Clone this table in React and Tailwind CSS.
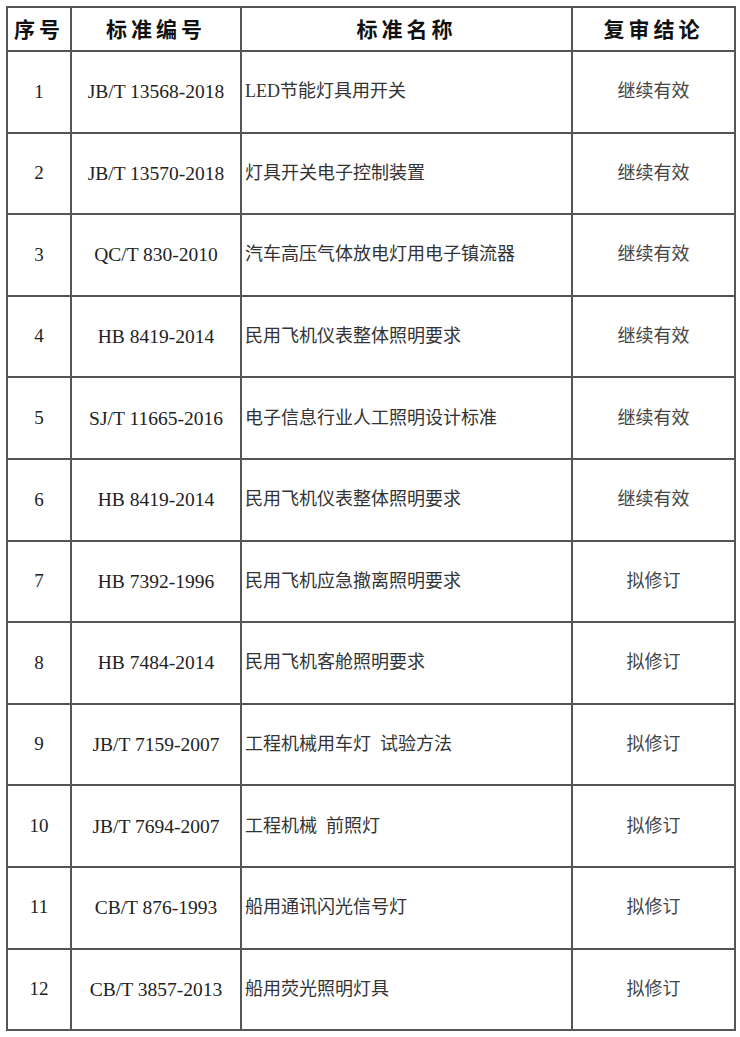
import React from "react";

const rows = [
  ["1", "JB/T 13568-2018", "LED节能灯具用开关", "继续有效"],
  ["2", "JB/T 13570-2018", "灯具开关电子控制装置", "继续有效"],
  ["3", "QC/T 830-2010", "汽车高压气体放电灯用电子镇流器", "继续有效"],
  ["4", "HB 8419-2014", "民用飞机仪表整体照明要求", "继续有效"],
  ["5", "SJ/T 11665-2016", "电子信息行业人工照明设计标准", "继续有效"],
  ["6", "HB 8419-2014", "民用飞机仪表整体照明要求", "继续有效"],
  ["7", "HB 7392-1996", "民用飞机应急撤离照明要求", "拟修订"],
  ["8", "HB 7484-2014", "民用飞机客舱照明要求", "拟修订"],
  ["9", "JB/T 7159-2007", "工程机械用车灯\u00a0\u00a0试验方法", "拟修订"],
  ["10", "JB/T 7694-2007", "工程机械\u00a0\u00a0前照灯", "拟修订"],
  ["11", "CB/T 876-1993", "船用通讯闪光信号灯", "拟修订"],
  ["12", "CB/T 3857-2013", "船用荧光照明灯具", "拟修订"],
];

const serif = {
  fontFamily: '"Liberation Serif", "Noto Sans CJK SC", serif',
};

export default function App() {
  return (
    <div className="bg-white w-[740px] h-[1037px] pt-[6px] pl-[6px]" style={serif}>
      <table className="border-collapse table-fixed w-[728px] text-[#222]">
        <colgroup>
          <col className="w-[64px]" />
          <col className="w-[170px]" />
          <col className="w-[331px]" />
          <col className="w-[163px]" />
        </colgroup>
        <thead>
          <tr className="h-[44px]">
            {["序号", "标准编号", "标准名称", "复审结论"].map((h) => (
              <th
                key={h}
                className="border-2 border-[#555] text-center text-[21px] font-bold tracking-[4px] text-[#111] p-0"
                style={{ fontFamily: '"Noto Sans CJK SC", sans-serif' }}
              >
                {h}
              </th>
            ))}
          </tr>
        </thead>
        <tbody>
          {rows.map((r, i) => (
            <tr key={i} className="h-[81.6px]">
              <td className="border-2 border-[#555] text-center text-[19px] p-0">{r[0]}</td>
              <td className="border-2 border-[#555] text-center text-[19.5px] p-0">{r[1]}</td>
              <td className="border-2 border-[#555] text-left text-[18px] pl-[3px] text-[#333]">{r[2]}</td>
              <td className="border-2 border-[#555] text-center text-[18px] p-0 text-[#444]">{r[3]}</td>
            </tr>
          ))}
        </tbody>
      </table>
    </div>
  );
}
